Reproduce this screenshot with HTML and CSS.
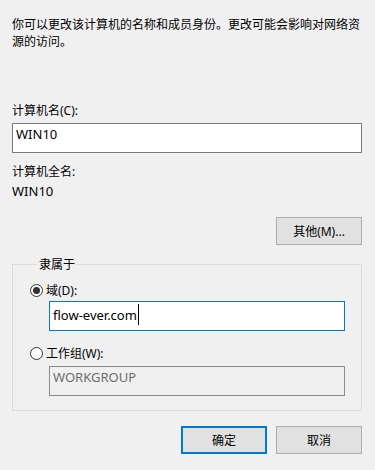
FILE: index.html
```html
<!DOCTYPE html>
<html lang="zh-CN">
<head>
    <meta charset="UTF-8">
    <meta name="viewport" content="width=device-width, initial-scale=1.0">
    <title>计算机名/域更改</title>
    <link rel="stylesheet" href="styles.css">
</head>
<body>

    <div class="dialog">
        <p class="intro">你可以更改该计算机的名称和成员身份。更改可能会影响对网络资源的访问。</p>

        <div class="label name-label">计算机名(C):</div>
        <div class="textbox">WIN10</div>

        <div class="label full-label">计算机全名:</div>
        <div class="value">WIN10</div>

        <div class="more-row">
            <button class="btn">其他(M)...</button>
        </div>

        <fieldset class="member-of">
            <legend>隶属于</legend>

            <div class="radio-row">
                <span class="radio checked"></span>
                <span>域(D):</span>
            </div>
            <div class="textbox focused">flow-ever.com<span class="caret"></span></div>

            <div class="radio-row second">
                <span class="radio"></span>
                <span>工作组(W):</span>
            </div>
            <div class="textbox disabled">WORKGROUP</div>
        </fieldset>

        <div class="actions">
            <button class="btn primary">确定</button>
            <button class="btn">取消</button>
        </div>
    </div>

</body>
</html>
```

FILE: styles.css
```css
:root {
    --dialog-bg: #f0f0f0;
    --text-color: #000;
    --muted-text: #6d6d6d;
    --box-border: #7a7a7a;
    --group-border: #dcdcdc;
    --btn-bg: #e1e1e1;
    --btn-border: #adadad;
    --accent: #0078d7;
}
body {
    margin: 0;
    background-color: var(--dialog-bg);
    color: var(--text-color);
    font-family: "Noto Sans", "Noto Sans CJK SC", sans-serif;
    font-size: 12px;
    line-height: 17px;
}
.dialog {
    width: 350px;
    padding: 16px 13px 0 12px;
}
.intro {
    margin: 0;
}
.label {
    margin-top: 52px;
}
.textbox {
    box-sizing: border-box;
    height: 30px;
    margin-top: 4px;
    padding: 2px 3px 0;
    border: 1px solid var(--box-border);
    background-color: #fff;
    font-size: 13px;
}
.full-label {
    margin-top: 10px;
}
.value {
    margin-top: 3px;
    font-size: 13px;
}
.more-row {
    display: flex;
    justify-content: flex-end;
    margin-top: 17px;
}
.btn {
    box-sizing: border-box;
    width: 86px;
    height: 28px;
    padding: 0;
    border: 1px solid var(--btn-border);
    background-color: var(--btn-bg);
    color: var(--text-color);
    font: inherit;
}
.btn.primary {
    border: 2px solid var(--accent);
}
.member-of {
    margin: 11px 0 0;
    padding: 9px 16px 14px 17px;
    border: 1px solid var(--group-border);
}
.member-of legend {
    margin-left: 7px;
    padding: 0 2px;
}
.radio-row {
    display: flex;
    align-items: center;
    gap: 3px;
}
.radio-row.second {
    margin-top: 14px;
}
.radio {
    box-sizing: border-box;
    width: 13px;
    height: 13px;
    border: 1px solid #333;
    border-radius: 50%;
    background-color: #fff;
    display: flex;
    align-items: center;
    justify-content: center;
}
.radio.checked::after {
    content: '';
    width: 7px;
    height: 7px;
    border-radius: 50%;
    background-color: #333;
}
.member-of .textbox {
    margin-left: 19px;
    margin-top: 2px;
}
.member-of .textbox.disabled {
    margin-top: 4px;
}
.textbox.focused {
    border-color: var(--accent);
}
.caret {
    display: inline-block;
    width: 1px;
    height: 21px;
    margin-left: 1px;
    vertical-align: -5px;
    background-color: #000;
}
.textbox.disabled {
    background-color: var(--dialog-bg);
    border-color: #8c8c8c;
    color: var(--muted-text);
}
.actions {
    display: flex;
    justify-content: flex-end;
    gap: 9px;
    margin-top: 15px;
}
```
